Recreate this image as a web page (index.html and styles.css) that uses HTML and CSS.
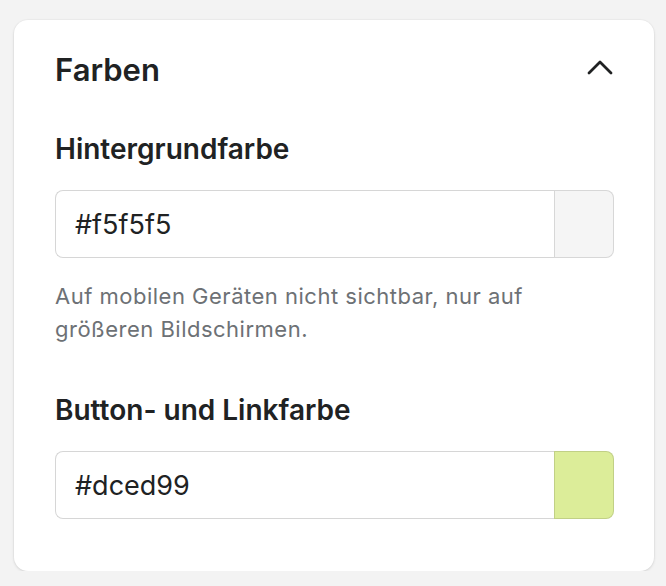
FILE: index.html
```html
<!DOCTYPE html>
<html lang="de">

<head>
    <meta charset="UTF-8">
    <meta name="viewport" content="width=device-width, initial-scale=1.0">
    <title>Farben</title>
    <link rel="stylesheet" href="styles.css">
</head>

<body>
    <div class="card">
        <div class="card-header">
            <h2>Farben</h2>
            <button class="toggle" type="button" aria-label="Einklappen">
                <svg width="28" height="16" viewBox="0 0 28 16">
                    <path d="M3 13 L14 2 L25 13" fill="none" stroke="#202223" stroke-width="2.8" stroke-linecap="round" stroke-linejoin="round"/>
                </svg>
            </button>
        </div>

        <div class="field">
            <label for="bgColor">Hintergrundfarbe</label>
            <div class="color-input">
                <input type="text" id="bgColor" value="#f5f5f5">
                <span class="swatch swatch-bg"></span>
            </div>
            <p class="help">Auf mobilen Geräten nicht sichtbar, nur auf größeren Bildschirmen.</p>
        </div>

        <div class="field field-last">
            <label for="linkColor">Button- und Linkfarbe</label>
            <div class="color-input">
                <input type="text" id="linkColor" value="#dced99">
                <span class="swatch swatch-link"></span>
            </div>
        </div>
    </div>
</body>

</html>
```

FILE: styles.css
```css
* {
    box-sizing: border-box;
    margin: 0;
    padding: 0;
}

body {
    font-family: Inter, "Noto Sans", sans-serif;
    background-color: #f3f3f3;
    color: #202223;
    padding: 20px 12px 0 14px;
}

.card {
    background-color: #ffffff;
    border-radius: 14px;
    box-shadow: 0 1px 3px rgba(0, 0, 0, 0.12), 0 0 0 1px rgba(0, 0, 0, 0.02);
    padding: 30px 40px 52px 41px;
}

.card-header {
    display: flex;
    justify-content: space-between;
    align-items: center;
}

h2 {
    font-size: 31px;
    line-height: 40px;
    font-weight: 600;
}

.toggle {
    background: none;
    border: none;
    cursor: pointer;
    display: flex;
    margin-top: -4px;
}

.field {
    margin-top: 43px;
}

label {
    display: block;
    font-size: 28px;
    line-height: 32px;
    font-weight: 600;
    margin-bottom: 25px;
}

.color-input {
    display: flex;
    height: 68px;
}

.color-input input[type="text"] {
    flex: 1;
    min-width: 0;
    border: 1px solid #d6d6d6;
    border-right: none;
    border-radius: 8px 0 0 8px;
    padding: 0 19px;
    font-family: Inter, "Noto Sans", sans-serif;
    font-size: 27px;
    color: #202223;
    outline: none;
}

.swatch {
    width: 60px;
    border: 1px solid rgba(0, 0, 0, 0.12);
    border-radius: 0 8px 8px 0;
}

.swatch-bg {
    background-color: #f5f5f5;
}

.swatch-link {
    background-color: #dced99;
}

.help {
    margin-top: 22px;
    font-size: 22px;
    line-height: 33px;
    letter-spacing: 0.5px;
    color: #6d7175;
}

.field-last {
    margin-top: 48px;
}
```
